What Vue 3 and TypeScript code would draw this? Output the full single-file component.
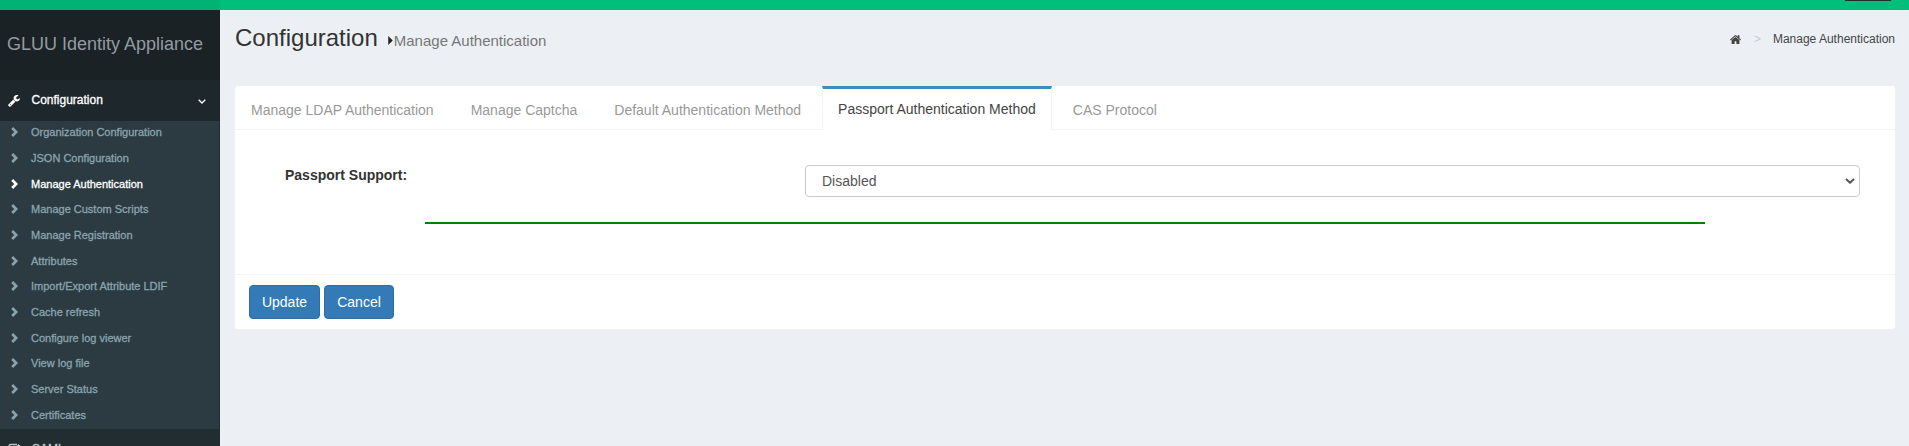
<script setup lang="ts">
import { ref } from 'vue'

const menu: string[] = [
  'Organization Configuration',
  'JSON Configuration',
  'Manage Authentication',
  'Manage Custom Scripts',
  'Manage Registration',
  'Attributes',
  'Import/Export Attribute LDIF',
  'Cache refresh',
  'Configure log viewer',
  'View log file',
  'Server Status',
  'Certificates',
]
const activeMenu = ref('Manage Authentication')

const tabs: string[] = [
  'Manage LDAP Authentication',
  'Manage Captcha',
  'Default Authentication Method',
  'Passport Authentication Method',
  'CAS Protocol',
]
const activeTab = ref('Passport Authentication Method')
const support = ref('Disabled')
</script>

<template>
  <div class="page">
    <header class="topbar">
      <div class="topbar-logo"></div>
      <div class="topbar-nav"><span class="user-box"></span></div>
    </header>
    <div class="body">
      <aside class="sidebar">
        <div class="brand">GLUU Identity Appliance</div>
        <div class="group open">
          <svg class="wrench" viewBox="0 0 1664 1664"><path fill="currentColor" d="M384 1344q0-26-19-45t-45-19-45 19-19 45 19 45 45 19 45-19 19-45zm644-420l-682 682q-37 37-90 37-52 0-91-37L59 1498q-38-36-38-90 0-53 38-91l681-681q39 98 114.500 173.500T1028 924zm634-435q0 39-23 106-47 134-164.500 217.500T1216 896q-185 0-316.500-131.500T768 448t131.500-316.500T1216 0q58 0 121.500 16.500T1445 63q16 11 16 28t-16 28l-293 169v224l193 107q5-3 79-48.500t135.500-81T1630 454q15 0 23.500 10t8.500 25z" /></svg>
          <span class="group-name">Configuration</span>
          <svg class="angle" viewBox="0 0 8 5"><path d="M.7.7 4 4 7.300.7" fill="none" stroke="currentColor" stroke-width="1.400" /></svg>
        </div>
        <ul class="submenu">
          <li v-for="item in menu" :key="item" :class="{ active: item === activeMenu }" @click="activeMenu = item">
            <svg class="chev" viewBox="0 0 7 10"><path d="M1.200 1 5.200 5 1.200 9" fill="none" stroke="currentColor" stroke-width="2.700" /></svg>
            <span>{{ item }}</span>
          </li>
        </ul>
        <div class="group saml">
          <svg class="edit" viewBox="0 0 13 12"><path d="M9 1.500H2.500Q1 1.500 1 3v6.500Q1 11 2.500 11h6.500q1.500 0 1.500-1.500V7" fill="none" stroke="currentColor" stroke-width="1.300" /><path d="M5 6.500 10.500 1l2 2L7 8.500H5z" fill="currentColor" /></svg>
          <span class="group-name">SAML</span>
        </div>
      </aside>
      <main class="content">
        <div class="heading">
          <h1>Configuration</h1>
          <svg class="caret" viewBox="0 0 5 10"><path d="M0 0 5 5 0 10z" fill="currentColor" /></svg>
          <small>Manage Authentication</small>
          <nav class="crumbs">
            <svg class="home" viewBox="0 0 1612 1283"><path fill="currentColor" d="M1382 739v480q0 26-19 45t-45 19H934V899H678v384H294q-26 0-45-19t-19-45V739q0-1 .5-3t.5-3l575-474 575 474q1 2 1 6zm223-69l-62 74q-8 9-21 11h-3q-13 0-21-7L806 171 114 748q-12 8-24 7-13-2-21-11L7 670q-8-10-7-23.500T11 625L730 26q32-26 76-26t76 26l244 204V35q0-14 9-23t23-9h192q14 0 23 9t9 23v408l219 182q10 8 11 21.500t-7 23.500z" /></svg>
            <span class="sep">&gt;</span>
            <span>Manage Authentication</span>
          </nav>
        </div>
        <section class="card">
          <div class="tabs">
            <div v-for="t in tabs" :key="t" class="tab" :class="{ active: t === activeTab }" @click="activeTab = t">{{ t }}</div>
          </div>
          <div class="panel">
            <div class="form-row">
              <label for="support">Passport Support:</label>
              <div class="select-box">
                <select id="support" v-model="support">
                  <option>Disabled</option>
                  <option>Enabled</option>
                </select>
                <svg class="arrow" viewBox="0 0 10 6"><path d="M1 1 5 4.700 9 1" fill="none" stroke="currentColor" stroke-width="2" /></svg>
              </div>
            </div>
            <div class="rule"></div>
          </div>
          <footer class="card-footer">
            <button class="update">Update</button>
            <button class="cancel">Cancel</button>
          </footer>
        </section>
      </main>
    </div>
  </div>
</template>

<style>
body { margin: 0; overflow: hidden; }
</style>

<style scoped>
* { box-sizing: border-box; }
.page { width: 100%; height: 446px; overflow: hidden; display: flex; flex-direction: column; font: 14px/20px Arial, "Liberation Sans", sans-serif; color: #333; background: #ecf0f5; }
.topbar { display: flex; height: 10px; flex: none; }
.topbar-logo { width: 220px; background: #00b274; }
.topbar-nav { flex: 1; background: #00bf7c; display: flex; justify-content: flex-end; padding-right: 18px; }
.user-box { width: 46px; height: 1px; background: #222d32; }
.body { display: flex; flex: 1; min-height: 0; }
.sidebar { width: 220px; flex: none; background: #222d32; overflow: hidden; }
.brand { height: 70px; padding: 24px 0 0 7px; background: #1a2226; color: #929ca0; font-size: 18px; white-space: nowrap; }
.group { height: 41px; display: flex; align-items: center; padding: 0 14px 2px 8px; font-size: 12px; color: #b8c7ce; -webkit-text-stroke: 0.3px; }
.group.open { background: #1e282c; color: #fff; }
.group-name { flex: 1; }
.wrench { width: 12px; height: 12px; margin: 2px 11.500px 0 0; }
.angle { width: 8px; height: 5px; margin-top: 3px; }
.edit { width: 13px; height: 12px; margin-right: 11px; }
.submenu { list-style: none; margin: 0; padding: 0; height: 308px; display: grid; grid-template-rows: repeat(12, 1fr); background: #2c3b41; border-right: 1px solid #222d32; }
.submenu li { display: flex; align-items: center; padding: 0 0 3px 11px; font-size: 11px; color: #8aa4af; -webkit-text-stroke: 0.3px; }
.submenu li.active { color: #fff; }
.chev { width: 7px; height: 10px; margin-right: 13px; }
.content { flex: 1; padding: 0 14px 0 15px; min-width: 0; }
.heading { height: 76px; display: flex; align-items: flex-start; }
h1 { margin: 15px 0 0; font-size: 24px; line-height: 26px; font-weight: 400; }
.caret { width: 5px; height: 9px; margin: 26px 1px 0 10px; color: #222; }
small { margin-top: 21px; font-size: 15px; color: #777; }
.crumbs { margin: 19px 0 0 auto; display: flex; align-items: center; font-size: 12px; color: #444; }
.home { width: 11px; height: 9px; }
.sep { margin: 0 12px 0 13px; color: #ccc; }
.card { height: 243px; background: #fff; border-radius: 3px; }
.tabs { height: 44px; display: flex; gap: 5px; border-bottom: 1px solid #f4f4f4; }
.tab { height: 44px; padding: 14px 16px 0; color: #999; white-space: nowrap; }
.tab.active { padding: 10px 15px 0; border: 1px solid #f4f4f4; border-top: 3px solid #3c8dbc; border-bottom: 0; background: #fff; color: #444; }
.panel { height: 144px; padding-top: 35px; }
.form-row { display: flex; padding: 0 35px 0 50px; }
label { width: 520px; font-weight: 700; }
.select-box { position: relative; flex: 1; height: 32px; }
select { width: 100%; height: 32px; appearance: none; border: 1px solid #ccc; border-radius: 4px; background: #fff; padding: 0 16px; font: inherit; color: #555; }
.arrow { position: absolute; right: 5px; top: 13px; width: 10px; height: 6px; color: #555; }
.rule { height: 2px; margin: 25px 190px 0; background: #008000; }
.card-footer { border-top: 1px solid #f4f4f4; height: 55px; padding: 10px 14px; display: flex; gap: 4px; }
button { height: 34px; padding: 0; border: 1px solid #2e6da4; border-radius: 4px; background: #337ab7; color: #fff; font: inherit; }
.update { width: 71px; }
.cancel { width: 70px; }
</style>
